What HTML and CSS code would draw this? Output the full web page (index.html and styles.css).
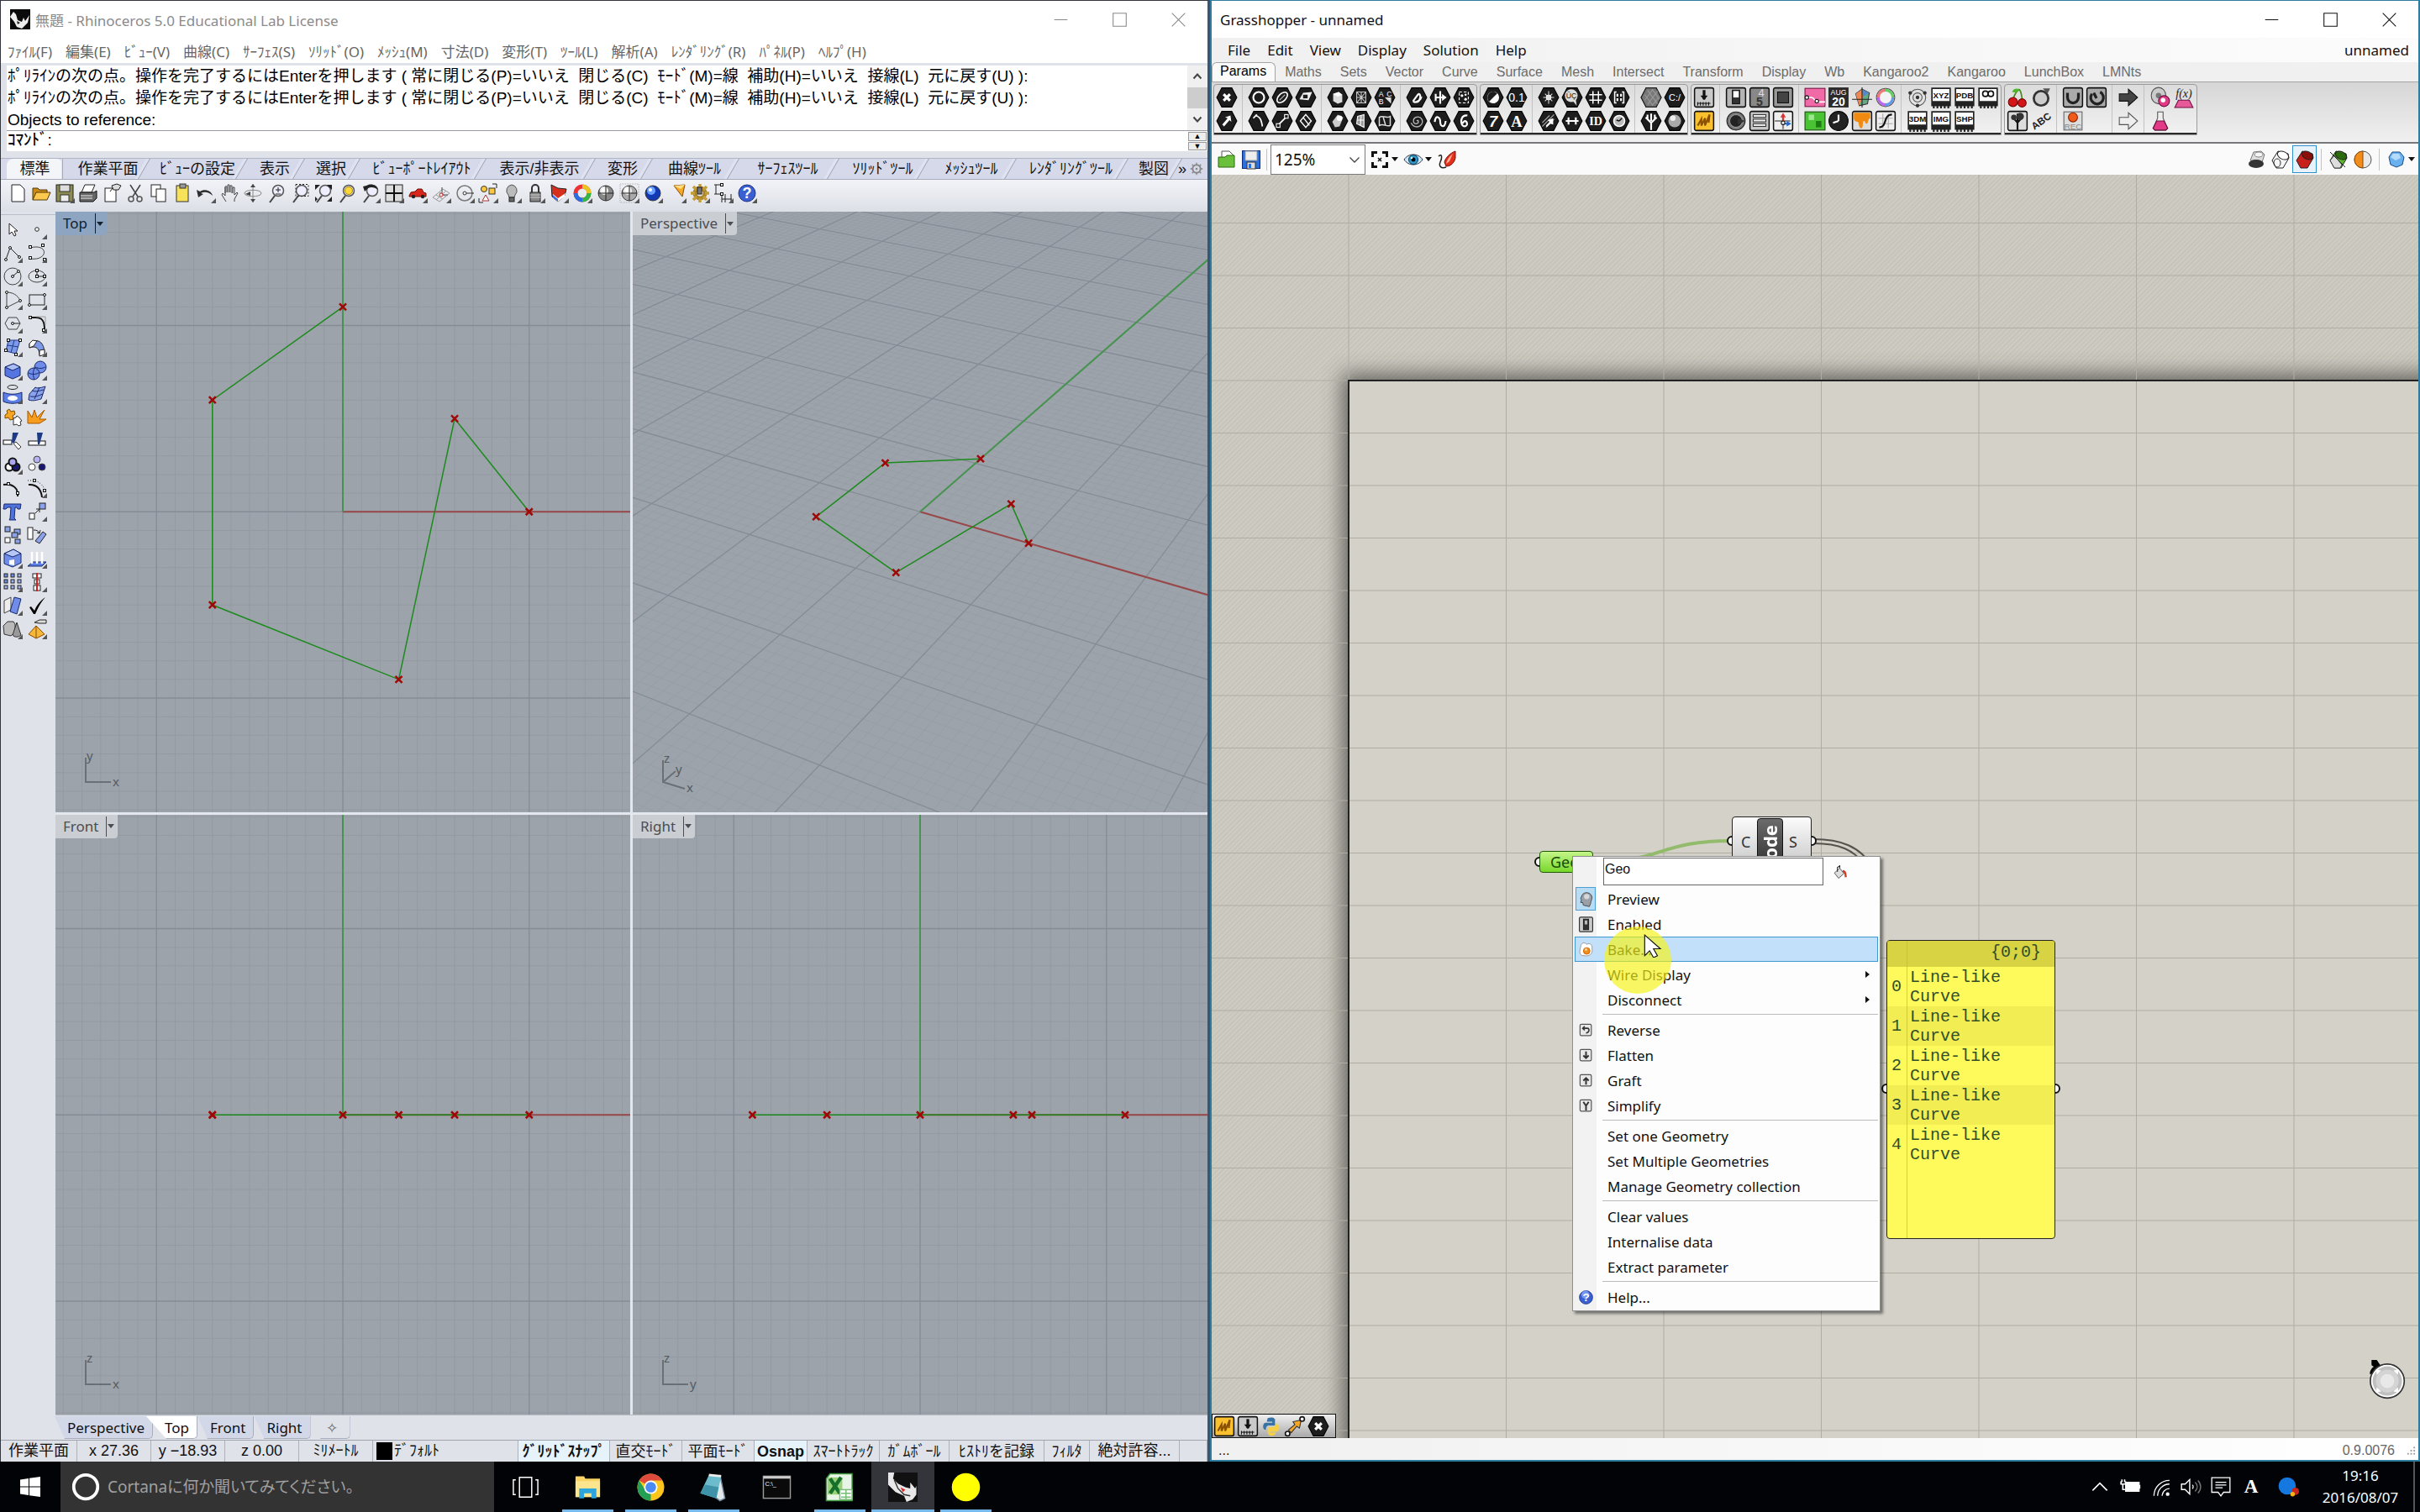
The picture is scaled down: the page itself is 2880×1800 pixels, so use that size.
FILE: index.html
```
<!DOCTYPE html>
<html lang="ja">
	<head>
		<meta charset="UTF-8" />
		<title>Rhinoceros + Grasshopper</title>
		<link rel="stylesheet" href="styles.css">
	</head>
	<body>
		<div class="desktop">
			<main class="rhino">
				<header class="titlebar">
					<span class="app-icon" data-icon="rhino"></span>
					<h1>無題 - Rhinoceros 5.0 Educational Lab License</h1>
					<div class="win-btns">
						<button aria-label="最小化" data-icon="min"></button>
						<button aria-label="最大化" data-icon="max"></button>
						<button aria-label="閉じる" data-icon="close"></button>
					</div>
				</header>
				<nav class="rhino-menu">
					<button>ﾌｧｲﾙ(F)</button>
					<button>編集(E)</button>
					<button>ﾋﾞｭｰ(V)</button>
					<button>曲線(C)</button>
					<button>ｻｰﾌｪｽ(S)</button>
					<button>ｿﾘｯﾄﾞ(O)</button>
					<button>ﾒｯｼｭ(M)</button>
					<button>寸法(D)</button>
					<button>変形(T)</button>
					<button>ﾂｰﾙ(L)</button>
					<button>解析(A)</button>
					<button>ﾚﾝﾀﾞﾘﾝｸﾞ(R)</button>
					<button>ﾊﾟﾈﾙ(P)</button>
					<button>ﾍﾙﾌﾟ(H)</button>
				</nav>
				<section class="console">
					<div class="history">
						<div class="history-text">
							<p>ﾎﾟﾘﾗｲﾝの次の点。操作を完了するにはEnterを押します ( 常に閉じる(P)=いいえ&nbsp; 閉じる(C)&nbsp; ﾓｰﾄﾞ(M)=線&nbsp; 補助(H)=いいえ&nbsp; 接線(L)&nbsp; 元に戻す(U) ):</p>
							<p>ﾎﾟﾘﾗｲﾝの次の点。操作を完了するにはEnterを押します ( 常に閉じる(P)=いいえ&nbsp; 閉じる(C)&nbsp; ﾓｰﾄﾞ(M)=線&nbsp; 補助(H)=いいえ&nbsp; 接線(L)&nbsp; 元に戻す(U) ):</p>
							<p>Objects to reference:</p>
						</div>
						<div class="scroll">
							<button aria-label="上へ" data-icon="up"></button>
							<span class="thumb"></span>
							<button aria-label="下へ" data-icon="down"></button>
						</div>
					</div>
					<div class="prompt">
						<label for="command">ｺﾏﾝﾄﾞ:</label>
						<input id="command" type="text">
						<div class="spin">
							<button aria-label="前のコマンド">▲</button>
							<button aria-label="次のコマンド">▼</button>
						</div>
					</div>
				</section>
				<nav class="tool-tabs">
					<button class="active">標準</button>
					<button>作業平面</button>
					<button>ﾋﾞｭｰの設定</button>
					<button>表示</button>
					<button>選択</button>
					<button>ﾋﾞｭｰﾎﾟｰﾄﾚｲｱｳﾄ</button>
					<button>表示/非表示</button>
					<button>変形</button>
					<button>曲線ﾂｰﾙ</button>
					<button>ｻｰﾌｪｽﾂｰﾙ</button>
					<button>ｿﾘｯﾄﾞﾂｰﾙ</button>
					<button>ﾒｯｼｭﾂｰﾙ</button>
					<button>ﾚﾝﾀﾞﾘﾝｸﾞﾂｰﾙ</button>
					<button>製図</button>
					<span class="more">»<i data-icon="cog"></i></span>
				</nav>
				<div class="toolbar" id="toolbar"></div>
				<div class="work">
					<aside class="sidebar" id="sidebar"></aside>
					<div class="viewports">
						<section class="viewport" id="vp-top">
							<button class="vp-label current"><span>Top</span></button>
						</section>
						<section class="viewport" id="vp-perspective">
							<button class="vp-label"><span>Perspective</span></button>
						</section>
						<section class="viewport" id="vp-front">
							<button class="vp-label"><span>Front</span></button>
						</section>
						<section class="viewport" id="vp-right">
							<button class="vp-label"><span>Right</span></button>
						</section>
					</div>
				</div>
				<nav class="view-tabs">
					<button>Perspective</button>
					<button class="active">Top</button>
					<button>Front</button>
					<button>Right</button>
					<button class="add" aria-label="追加">✧</button>
				</nav>
				<footer class="rhino-status">
					<span>作業平面</span>
					<span>x 27.36</span>
					<span>y −18.93</span>
					<span>z 0.00</span>
					<span>ﾐﾘﾒｰﾄﾙ</span>
					<span class="layer"><i></i>ﾃﾞﾌｫﾙﾄ</span>
					<button class="on">ｸﾞﾘｯﾄﾞｽﾅｯﾌﾟ</button>
					<button>直交ﾓｰﾄﾞ</button>
					<button>平面ﾓｰﾄﾞ</button>
					<button class="on">Osnap</button>
					<button>ｽﾏｰﾄﾄﾗｯｸ</button>
					<button>ｶﾞﾑﾎﾞｰﾙ</button>
					<button>ﾋｽﾄﾘを記録</button>
					<button>ﾌｨﾙﾀ</button>
					<span>絶対許容...</span>
					<span></span>
				</footer>
			</main>

			<section class="gh">
				<header class="titlebar">
					<h2>Grasshopper - unnamed</h2>
					<div class="win-btns">
						<button aria-label="Minimize" data-icon="min"></button>
						<button aria-label="Maximize" data-icon="max"></button>
						<button aria-label="Close" data-icon="close"></button>
					</div>
				</header>
				<nav class="gh-menu">
					<button>File</button>
					<button>Edit</button>
					<button>View</button>
					<button>Display</button>
					<button>Solution</button>
					<button>Help</button>
					<span>unnamed</span>
				</nav>
				<nav class="gh-tabs">
					<button class="active">Params</button>
					<button>Maths</button>
					<button>Sets</button>
					<button>Vector</button>
					<button>Curve</button>
					<button>Surface</button>
					<button>Mesh</button>
					<button>Intersect</button>
					<button>Transform</button>
					<button>Display</button>
					<button>Wb</button>
					<button>Kangaroo2</button>
					<button>Kangaroo</button>
					<button>LunchBox</button>
					<button>LMNts</button>
				</nav>
				<div class="ribbon" id="ribbon"></div>
				<div class="gh-tools">
					<button aria-label="Open" data-icon="ghOpen"></button>
					<button aria-label="Save" data-icon="ghSave"></button>
					<i class="sep"></i>
					<div class="zoom">
						<select aria-label="Zoom"><option>125%</option></select>
						<i data-icon="comboArrow"></i>
					</div>
					<button aria-label="Zoom extents" data-icon="ghFrame"></button>
					<i class="drop"></i>
					<button aria-label="Named views" data-icon="eye"></button>
					<i class="drop"></i>
					<button aria-label="Sketch" data-icon="brush"></button>
					<div class="gh-tools-right">
						<button aria-label="No preview" data-icon="tubeOff"></button>
						<button aria-label="Wireframe preview" data-icon="tubeWire"></button>
						<button class="picked" aria-label="Shaded preview" data-icon="tubeRed"></button>
						<i class="sep"></i>
						<button aria-label="Selected only" data-icon="tubeGreen"></button>
						<button aria-label="Document preview" data-icon="ballOrange"></button>
						<i class="sep"></i>
						<button aria-label="Mesh quality" data-icon="gemBlue"></button>
						<i class="drop"></i>
					</div>
				</div>
				<div class="canvas" id="canvas">
					<div class="node geo">Geo</div>
					<div class="node explode">
						<span class="in">C</span>
						<span class="core"><b>Explode</b></span>
						<span class="out">S</span>
					</div>
					<div class="node panel">
						<div class="path">{0;0}</div>
						<ol start="0">
							<li><i>0</i><p>Line-like Curve</p></li>
							<li><i>1</i><p>Line-like Curve</p></li>
							<li><i>2</i><p>Line-like Curve</p></li>
							<li><i>3</i><p>Line-like Curve</p></li>
							<li><i>4</i><p>Line-like Curve</p></li>
						</ol>
					</div>
					<div class="recent" id="recent"></div>
					<div class="compass" data-icon="compass"></div>
					<div class="context">
						<div class="name-row">
							<input type="text" value="Geo" aria-label="Name">
							<button aria-label="Colour" data-icon="bucket"></button>
						</div>
						<button><i class="checked" data-icon="head"></i>Preview</button>
						<button><i data-icon="toggle"></i>Enabled</button>
						<button class="hover"><i data-icon="egg"></i>Bake...</button>
						<button class="sub"><i></i>Wire Display</button>
						<button class="sub"><i></i>Disconnect</button>
						<hr>
						<button><i data-icon="mReverse"></i>Reverse</button>
						<button><i data-icon="mFlatten"></i>Flatten</button>
						<button><i data-icon="mGraft"></i>Graft</button>
						<button><i data-icon="mSimplify"></i>Simplify</button>
						<hr>
						<button><i></i>Set one Geometry</button>
						<button><i></i>Set Multiple Geometries</button>
						<button><i></i>Manage Geometry collection</button>
						<hr>
						<button><i></i>Clear values</button>
						<button><i></i>Internalise data</button>
						<button><i></i>Extract parameter</button>
						<hr>
						<button><i data-icon="help"></i>Help...</button>
					</div>
					<div class="spot"></div>
					<div class="cursor" data-icon="cursor"></div>
				</div>
				<footer class="gh-status">
					<b>...</b>
					<span>0.9.0076</span>
					<i data-icon="resize"></i>
				</footer>
			</section>
		</div>

		<div class="taskbar">
			<button class="start" aria-label="スタート" data-icon="windows"></button>
			<label class="search">
				<i data-icon="ring"></i>
				<input type="text" placeholder="Cortanaに何か聞いてみてください。">
			</label>
			<button aria-label="タスク ビュー" data-icon="taskview"></button>
			<button class="open" aria-label="エクスプローラー" data-icon="explorer"></button>
			<button class="open" aria-label="Chrome" data-icon="chrome"></button>
			<button class="open" aria-label="メモ帳" data-icon="notepad"></button>
			<button aria-label="コマンド プロンプト" data-icon="cmd"></button>
			<button class="open" aria-label="Excel" data-icon="excel"></button>
			<button class="open front" aria-label="Rhinoceros" data-icon="rhinoBig"></button>
			<button class="open" aria-label="Pointer" data-icon="yellow"></button>
			<div class="tray">
				<i data-icon="chevron"></i>
				<i data-icon="battery"></i>
				<i data-icon="wifi"></i>
				<i data-icon="speaker"></i>
				<i data-icon="message"></i>
				<b>A</b>
				<i class="ball" data-icon="ball"></i>
				<time>19:16<br>2016/08/07</time>
			</div>
		</div>

		<script src="script.js"></script>
	</body>
</html>
```

FILE: styles.css
```
* {
	box-sizing: border-box;
}

body {
	margin: 0;
	height: 100vh;
	display: flex;
	flex-direction: column;
	overflow: hidden;
	background: #020307;
	color: #111;
	font-family: "Noto Sans", "Noto Sans CJK JP", sans-serif;
	font-size: 17px;
}

button,
input,
select {
	margin: 0;
	padding: 0;
	border: none;
	border-radius: 0;
	background: none;
	color: inherit;
	font: inherit;
	white-space: nowrap;
}

h1,
h2,
p,
ol {
	margin: 0;
	padding: 0;
	font-size: inherit;
	font-weight: normal;
}

i {
	font-style: normal;
}

svg {
	display: block;
}

.desktop {
	flex: 1;
	min-height: 0;
	display: flex;
}

/* windows */
.rhino,
.gh {
	flex: 1;
	min-width: 0;
	display: flex;
	flex-direction: column;
	border: 1px solid #33353d;
	background: #dfe2e9;
}
.rhino {
	border-right: 3px solid #3b5570;
	border-bottom: none;
}
.gh {
	border: 2px solid #2e7c9f;
	border-width: 1px 2px 2px;
	background: #f0f0f0;
}

.titlebar {
	display: flex;
	align-items: center;
	height: 44px;
	flex: none;
	padding-left: 11px;
	background: #fff;
}
.titlebar h1 {
	padding-left: 6px;
	color: #8b8b8b;
}
.app-icon svg {
	width: 24px;
	height: 24px;
}
.win-btns {
	margin-left: auto;
	display: flex;
}
.win-btns button {
	width: 70px;
	display: flex;
	justify-content: center;
}
.win-btns svg {
	width: 17px;
	height: 17px;
}
.rhino .win-btns {
	color: #888;
}

/* rhino menu */
.rhino-menu {
	display: flex;
	gap: 16px;
	height: 30px;
	flex: none;
	padding: 0 8px;
	align-items: center;
	background: #fff;
	color: #666;
}

/* command area */
.console {
	flex: none;
	margin: 3px 0 0 7px;
	background: #fff;
	font-family: "Liberation Sans", "Noto Sans CJK JP", sans-serif;
	font-size: 19px;
	color: #000;
}
.history {
	display: flex;
	height: 78px;
	border-bottom: 1px solid #999ca4;
}
.history-text {
	flex: 1;
	min-width: 0;
	overflow: hidden;
}
.history p {
	line-height: 26px;
	padding-left: 1px;
	white-space: nowrap;
}
.scroll {
	width: 24px;
	display: flex;
	flex-direction: column;
	background: #f0f0f0;
}
.scroll button {
	height: 26px;
	display: flex;
	align-items: center;
	justify-content: center;
}
.scroll svg {
	width: 12px;
	height: 12px;
}
.thumb {
	flex: 1;
	background: #cdcdcd;
}
.prompt {
	display: flex;
	height: 24px;
}
.prompt label {
	line-height: 22px;
	font-weight: 500;
	padding-left: 1px;
}
.prompt input {
	flex: 1;
}
.spin {
	width: 24px;
	display: flex;
	flex-direction: column;
	gap: 1px;
	padding: 1px;
}
.spin button {
	flex: 1;
	border: 1px solid #999;
	background: #eee;
	font-size: 9px;
	line-height: 8px;
}

/* toolbar tabs */
.tool-tabs {
	display: grid;
	grid-template-columns: 67px 97px 116px 68px 66px 150px 130px 68px 103px 119px 107px 104px 133px 64px 1fr;
	height: 26px;
	flex: none;
	margin-top: 8px;
	padding-left: 7px;
	border-top: 1px solid #b0b5c6;
	border-bottom: 1px solid #a7acbd;
	background: #d5d9ea;
	font-size: 18px;
	font-family: "Liberation Sans", "Noto Sans CJK JP", sans-serif;
}
.tool-tabs button {
	position: relative;
	line-height: 24px;
	padding-left: 10px;
}
.tool-tabs button::after {
	content: "";
	position: absolute;
	right: 0;
	top: 0;
	width: 4px;
	height: 24px;
	border-right: 1px solid #9a9fb2;
	background: #dfe2ef;
	transform: skewX(-30deg);
}
.tool-tabs .active {
	padding-left: 0;
	background: #f4f5f9;
	border-radius: 8px 8px 0 0;
}
.tool-tabs .active::after {
	transform: none;
	border-color: #a7acbd;
	width: 1px;
}
.more {
	display: flex;
	align-items: center;
	gap: 4px;
	padding-left: 2px;
	line-height: 22px;
}
.more svg {
	width: 16px;
	height: 16px;
}

.toolbar {
	display: flex;
	height: 38px;
	flex: none;
	padding: 0 6px;
	background: linear-gradient(#f2f3f7, #dcdfe6);
}
.toolbar button,
.sidebar button {
	width: 28px;
	display: flex;
	align-items: center;
	justify-content: center;
}
.toolbar svg,
.sidebar svg {
	width: 24px;
	height: 24px;
}
.toolbar button {
	padding-bottom: 6px;
}

.work {
	flex: 1;
	min-height: 0;
	display: flex;
}
.sidebar {
	width: 65px;
	display: grid;
	grid-template-columns: 29px 28px;
	grid-auto-rows: 28px;
	align-content: start;
	margin-top: 3px;
	padding-top: 3px;
	border-top: 1px solid #b9bdc9;
	background: #dfe2e9;
}

/* viewports */
.viewports {
	flex: 1;
	display: grid;
	grid-template-columns: 1fr 1fr;
	grid-template-rows: 1fr 1fr;
	gap: 3px;
	background: #e4e8ee;
	border-bottom: 1px solid #b5b9c2;
}
.viewport {
	position: relative;
	overflow: hidden;
	background: #9ca3ab;
}
.scene {
	position: absolute;
	inset: 0;
	width: 100%;
	height: 100%;
}
.axes {
	position: absolute;
	left: 28px;
	bottom: 20px;
	width: 60px;
	height: 72px;
	overflow: visible;
}
.axes text {
	font: 15px "Noto Sans", sans-serif;
	fill: #555b62;
}
.vp-label {
	position: absolute;
	left: 0;
	top: 0;
	height: 28px;
	display: flex;
	align-items: center;
	padding: 0 4px 0 9px;
	background: #cacdd2;
	border-radius: 0 0 4px 0;
	color: #4a4d52;
}
.vp-label span {
	padding-right: 9px;
	line-height: 24px;
	border-right: 1px solid currentColor;
}
.vp-label::after,
.drop {
	content: "";
	border: 4px solid transparent;
	border-top: 5px solid currentColor;
	border-bottom: none;
}
.vp-label::after {
	margin-left: 1px;
}
.vp-label.current {
	background: #8da5c0;
	color: #13202e;
}

.view-tabs {
	display: flex;
	height: 30px;
	flex: none;
	padding: 1px 0 1px 64px;
	border-bottom: 1px solid #a0a4ae;
}
.view-tabs button {
	position: relative;
	padding: 0 9px 0 15px;
	background: #d3d8e8;
	border: 1px solid #a9aebf;
	border-width: 0 1px 1px 0;
	border-radius: 0 0 5px 0;
	line-height: 28px;
	clip-path: polygon(0 0, 100% 0, 100% 100%, 12px 100%);
}
.view-tabs .active {
	padding-left: 22px;
	margin-left: -8px;
	background: #fff;
	clip-path: polygon(0 0, 100% 0, 100% 100%, 24px 100%);
}
.view-tabs .add {
	background: #dfe2e9;
	padding: 0 14px 0 18px;
	color: #666;
}

.rhino-status {
	display: grid;
	grid-template-columns: 91px 88px 88px 88px 88px 173px 109px 86px 86px 63px 86px 83px 113px 54px 107px 1fr;
	height: 25px;
	flex: none;
	background: #dfe2e9;
	font-family: "Liberation Sans", "Noto Sans CJK JP", sans-serif;
	font-size: 18px;
	text-align: center;
}
.rhino-status > * {
	overflow: hidden;
	white-space: nowrap;
	line-height: 24px;
	border-right: 1px solid #adb1bb;
}
.rhino-status .on {
	background: #e7f3fb;
	font-weight: bold;
}
.rhino-status .layer {
	display: flex;
	gap: 2px;
	padding: 2px 4px;
	line-height: 20px;
}
.layer i {
	width: 19px;
	background: #000;
}

/* grasshopper */
.gh .titlebar {
	padding-left: 10px;
}
.gh-menu {
	display: flex;
	align-items: center;
	gap: 20px;
	height: 29px;
	flex: none;
	padding: 0 11px 0 19px;
	background: linear-gradient(90deg, #f0f0f0, #fcfcfc);
}
.gh-menu span {
	margin-left: auto;
}
.gh-tabs {
	display: flex;
	height: 24px;
	flex: none;
	color: #6c6c6c;
	font: 16px "Liberation Sans", sans-serif;
	border-bottom: 1px solid #a5a5a5;
}
.gh-tabs button {
	padding: 0 11px;
}
.gh-tabs .active {
	color: #000;
	padding: 0 10px 3px 9px;
	background: #fafafa;
	border: 1px solid #a5a5a5;
	border-bottom: none;
	border-radius: 6px 6px 0 0;
}
.ribbon {
	display: flex;
	gap: 3px;
	height: 73px;
	flex: none;
	padding: 2px 2px 8px;
	background: linear-gradient(#d6d6d6, #f0f0f0);
	border-bottom: 2px solid #77787c;
}
.ribbon-panel {
	display: flex;
	flex-direction: column;
	overflow: hidden;
	border: 1px solid #9c9c9c;
	border-radius: 4px 4px 0 0;
	background: linear-gradient(#dcdcdc, #f2f2f2);
}
.ribbon-groups {
	display: flex;
	padding: 0 1px;
	flex: none;
}
.ribbon-group {
	display: grid;
	grid-auto-flow: column;
	grid-template-rows: 28px 28px;
	grid-auto-columns: 28px;
	padding: 1px 0 0;
}
.ribbon-group + .ribbon-group {
	margin-left: 4px;
	padding-left: 5px;
	border-left: 1px solid #c2c2c2;
}
.ribbon-group button {
	display: flex;
	align-items: center;
	justify-content: center;
}
.ribbon svg,
.recent svg {
	width: 26px;
	height: 26px;
}
.caption {
	flex: none;
	height: 18px;
	line-height: 15px;
	background: #2a2a2a;
	color: #fff;
	text-align: center;
	font-size: 14px;
}

.gh-tools {
	display: flex;
	align-items: center;
	height: 37px;
	flex: none;
	padding: 0 1px 0 3px;
	background: #fafafa;
}
.gh-tools button {
	width: 29px;
	height: 33px;
	display: flex;
	align-items: center;
	justify-content: center;
}
.gh-tools svg {
	width: 24px;
	height: 24px;
}
.gh-tools .sep {
	width: 1px;
	height: 26px;
	margin: 0 4px;
	background: #c4c4c4;
}
.zoom {
	position: relative;
	margin-right: 2px;
}
.zoom select {
	display: block;
	width: 113px;
	height: 36px;
	padding: 0 0 0 4px;
	border: 1px solid #7a7a7a;
	background: #fff;
	font-size: 19px;
	appearance: none;
}
.zoom i {
	position: absolute;
	right: 7px;
	top: 12px;
	pointer-events: none;
}
.zoom svg {
	width: 12px;
	height: 12px;
}
.gh-tools .drop {
	margin: 0 3px 0 0;
	color: #111;
}
.gh-tools-right {
	margin-left: auto;
	display: flex;
	align-items: center;
}
.gh-tools-right .sep {
	margin: 0 5px;
}
.gh-tools .picked {
	border: 1px solid #2f8fc9;
	background: #e8f2fa;
}

.canvas {
	position: relative;
	flex: 1;
	min-height: 0;
	overflow: hidden;
	background: repeating-linear-gradient(135deg, #cecbc3 0 2px, #c7c4bb 2px 4px);
}
.canvas > svg {
	position: absolute;
	inset: 0;
	width: 100%;
	height: 100%;
}
.node {
	position: absolute;
	border: 1px solid #222;
	border-radius: 4px;
}
.geo {
	left: 390px;
	top: 805px;
	width: 64px;
	height: 26px;
	padding-left: 12px;
	border-color: #1c5a00;
	background: linear-gradient(#c4f58a, #78d82a);
	line-height: 24px;
	font-size: 18px;
	color: #174a00;
}
.explode {
	left: 619px;
	top: 764px;
	width: 95px;
	height: 118px;
	display: flex;
	justify-content: space-between;
	padding: 0 16px 0 10px;
	background: linear-gradient(#fcfcfc, #c8c8c8 50%, #a5a5a5);
	font-size: 18px;
	line-height: 58px;
	color: #333;
}
.core {
	width: 31px;
	margin: 1px 0;
	padding-bottom: 12px;
	display: flex;
	align-items: center;
	justify-content: center;
	border: 1px solid #111;
	border-radius: 4px;
	background: linear-gradient(#6b6b6b, #333 50%);
	color: #fff;
	writing-mode: vertical-rl;
}
.core b {
	font-size: 22px;
	line-height: 26px;
	transform: rotate(180deg);
}
.panel {
	left: 803px;
	top: 911px;
	width: 201px;
	height: 356px;
	background: linear-gradient(90deg, transparent 23px, #d5cf45 23px 24px, transparent 24px), #fffa5c;
	color: #2f4f2a;
	font: 20px "Liberation Mono", monospace;
}
.panel .path {
	height: 31px;
	padding-right: 16px;
	line-height: 28px;
	text-align: right;
	background: rgba(190, 185, 50, 0.6);
}
.panel ol {
	list-style: none;
}
.panel li {
	display: flex;
	align-items: center;
	height: 47px;
	line-height: 23px;
}
.panel li:nth-child(even) {
	background: rgba(190, 185, 50, 0.2);
}
.panel li i {
	width: 18px;
	padding-left: 5px;
	margin-right: 9px;
}
.panel li p {
	width: 130px;
}
.recent {
	position: absolute;
	left: 0;
	bottom: 0;
	display: flex;
	align-items: center;
	height: 29px;
	padding-right: 6px;
	border: 1px solid #111;
	background: linear-gradient(#f0f0f0, #a9a9a9);
}
.recent button {
	width: 28px;
	display: flex;
	justify-content: center;
}
.compass {
	position: absolute;
	right: 14px;
	bottom: 45px;
}
.compass svg {
	width: 50px;
	height: 50px;
}

/* context menu */
.context {
	position: absolute;
	left: 429px;
	top: 811px;
	width: 367px;
	display: flex;
	flex-direction: column;
	padding: 1px 2px 1px;
	border: 1px solid #8e8e8e;
	background: linear-gradient(90deg, #f2f2f2 28px, #fdfdfd 28px);
	box-shadow: 3px 3px 3px rgba(0, 0, 0, 0.45);
	color: #111;
}
.context button {
	display: flex;
	align-items: center;
	height: 30px;
	flex: none;
	padding-left: 1px;
	text-align: left;
}
.context i {
	width: 24px;
	height: 28px;
	display: flex;
	align-items: center;
	justify-content: center;
	margin-right: 14px;
	border: 1px solid transparent;
}
.context i svg {
	width: 19px;
	height: 19px;
}
.context .checked {
	border-color: #4d9fd6;
	background: #b9dcf5;
}
.context .hover {
	border: 1px solid #3f97cf;
	background: #c2e0fa;
	padding-left: 0;
}
.context .sub::after {
	content: "";
	margin: 0 10px 0 auto;
	border: 4px solid transparent;
	border-left: 5px solid #111;
	border-right: none;
}
.context hr {
	width: 328px;
	margin: 2px 0 3px auto;
	border: none;
	border-top: 1px solid #bcbcbc;
	flex: none;
}
.name-row {
	display: flex;
	height: 34px;
	padding-left: 34px;
}
.name-row input {
	width: 262px;
	height: 33px;
	padding: 0 1px 6px;
	border: 1px solid #666;
	background: #fff;
	font: 16px "Liberation Sans", sans-serif;
}
.name-row button {
	height: 34px;
	padding-left: 11px;
}
.name-row svg {
	width: 17px;
	height: 17px;
}
.spot {
	position: absolute;
	left: 467px;
	top: 895px;
	width: 80px;
	height: 80px;
	border-radius: 50%;
	background: rgba(247, 243, 20, 0.66);
}
.cursor {
	position: absolute;
	left: 513px;
	top: 904px;
}
.cursor svg {
	width: 28px;
	height: 28px;
}

.gh-status {
	display: flex;
	align-items: center;
	height: 26px;
	flex: none;
	padding: 3px 3px 0 8px;
	background: linear-gradient(90deg, #f0f0f0, #fff);
	color: #666;
	font: 16px "Liberation Sans", sans-serif;
}
.gh-status b {
	color: #111;
	margin-right: auto;
	font-weight: normal;
}
.gh-status span {
	margin-right: 14px;
}
.gh-status svg {
	width: 11px;
	height: 14px;
}

/* taskbar */
.taskbar {
	display: flex;
	height: 60px;
	flex: none;
	background: #020307;
	color: #fff;
}
.taskbar > button {
	width: 75px;
	display: flex;
	align-items: center;
	justify-content: center;
}
.taskbar > button svg {
	width: 35px;
	height: 35px;
}
.taskbar .start {
	width: 72px;
}
.taskbar .start svg {
	width: 24px;
	height: 24px;
}
.search {
	width: 516px;
	display: flex;
	align-items: center;
	padding-left: 12px;
	gap: 8px;
	background: #333;
}
.search + button {
	width: 74px;
}
.search svg {
	width: 36px;
	height: 36px;
}
.search input {
	flex: 1;
	font-size: 19px;
	font-feature-settings: "palt";
}
.search input::placeholder {
	color: #a0a0a0;
	opacity: 1;
}
.taskbar .open {
	background: linear-gradient(#76b9ed, #76b9ed) center bottom / 61px 3px no-repeat;
}
.taskbar .front {
	background-color: #34353a;
	background-size: 75px 3px;
}
.tray {
	margin-left: auto;
	display: flex;
	align-items: center;
	margin-right: 6px;
	padding-right: 15px;
	border-right: 2px solid #555;
}
.tray i,
.tray b {
	width: 36px;
	display: flex;
	justify-content: center;
}
.tray b {
	font: bold 23px "Liberation Serif", serif;
}
.tray i svg {
	width: 26px;
	height: 26px;
}
.tray .ball {
	margin-left: 8px;
}
.tray time {
	width: 96px;
	margin-left: 20px;
	font-size: 17px;
	line-height: 26px;
	text-align: center;
}
```

FILE: script.js
```
const line = (d, color = "#222", w = 1) =>
	`<path d="${d}" fill="none" stroke="${color}" stroke-width="${w}"/>`;
const dashed = (d, color, w, dash) =>
	`<path d="${d}" fill="none" stroke="${color}" stroke-width="${w}" stroke-dasharray="${dash}"/>`;
const fill = (d, color, edge = "none") => `<path d="${d}" fill="${color}" stroke="${edge}"/>`;
const dot = (x, y, r, color, edge = "none", w = 1) =>
	`<circle cx="${x}" cy="${y}" r="${r}" fill="${color}" stroke="${edge}" stroke-width="${w}"/>`;
const box = (x, y, w, h, color, edge = "none") =>
	`<rect x="${x}" y="${y}" width="${w}" height="${h}" fill="${color}" stroke="${edge}"/>`;
const word = (t, x, y, size, color = "#fff", extra = "") =>
	`<text x="${x}" y="${y}" font-size="${size}" fill="${color}" text-anchor="middle" font-family="Liberation Sans, sans-serif" ${extra}>${t}</text>`;
const knob = (x, y) => box(x - 1.5, y - 1.5, 3, 3, "#fff", "#111");

// flyout corner
const fly = `<path d="M24 18v6h-6z" fill="#555"/>`;
const lens = (inner = "") => line("M10 15l-6 8", "#444", 2) + dot(14, 9, 6.5, "#eef", "#555", 1.5) + inner;
const page = (x, y, w, h) => box(x, y, w, h, "#fff", "#222");
const sphere = (c1, c2) => dot(12, 12, 9, c2, "#333") + dot(10, 9, 5, c1) + dot(9, 8, 2, "#fff");

// grasshopper icon bases
const hex = (inner) => fill("M6.5 1.5h11L23 12l-5.5 10.5h-11L1 12z", "#1d1d1d", "#000") + inner;
const tile = (inner, bg = "#c9c9c9") =>
	`<rect x="1.5" y="1.5" width="21" height="21" rx="2" fill="${bg}" stroke="#111" stroke-width="1.4"/>` + inner;
const chip = (t) =>
	`<path d="M2 2h20v19H2z" fill="#fff" stroke="#222" stroke-width="1.5"/><path d="M2 16h20v5H2z" fill="#222"/>` +
	dashed("M3 22.500h18", "#222", 3, "2 2") + word(t, 12, 13, 9, "#111", 'font-weight="bold"');
const tube = (c1, c2) =>
	fill("M2 13L9 2l12 3 1 5-7 12H7z", c1, "#222") +
	`<ellipse cx="15" cy="7" rx="7" ry="4.500" transform="rotate(25 15 7)" fill="${c2}" stroke="#222"/>`;

const scribble = line("M5 17l4-7v7l4-8v8l5-12-1 9", "#8a5200", 2);
const mini = (inner) => `<rect x="3" y="3" width="17" height="17" rx="2" fill="#e8e8e8" stroke="#555" stroke-width="1.500"/>` + inner;

const icons = {
	// window chrome
	min: line("M1 12h22", "currentColor", 1.5),
	max: line("M1 1h22v22H1z", "currentColor", 1.5),
	close: line("M1 1l22 22M23 1L1 23", "currentColor", 1.5),
	up: line("M3 17l9-10 9 10", "#444", 4),
	down: line("M3 7l9 10 9-10", "#444", 4),
	comboArrow: line("M1 7l11 11L23 7", "#444", 2.5),
	cog: dot(12, 12, 7, "none", "#888", 3) + line("M12 1v4M12 19v4M1 12h4M19 12h4M4 4l3 3M17 17l3 3M20 4l-3 3M4 20l3-3", "#888", 2) + dot(12, 12, 2, "#888"),
	rhino: box(0, 0, 24, 24, "#0a0a0a") + fill("M0 9l4-6 3 3 2 7 5 2 2-5 2 4 5-7-2 9-7 7-6-2-3-6z", "#eee") + fill("M8 14l4 2-3 2z", "#222"),

	// standard toolbar
	fNew: fill("M5 2h10l5 5v15H5z", "#fff", "#222"),
	fOpen: fill("M2 20V6h6l2 2h9v4", "#c98a1a", "#553a00") + fill("M2 20l4-9h17l-4 9z", "#fcc94e", "#553a00"),
	fSave: box(2, 2, 20, 20, "#8b8b52", "#222") + box(6, 2, 12, 8, "#ddd", "#333") + box(7, 14, 10, 8, "#eee", "#333") + fly,
	fPrint: fill("M8 2h12l-4 9H4z", "#fff", "#222") + fill("M2 11h17l3-2v9l-4 4H2z", "#666", "#111") + line("M3 15h14M3 18h14", "#eee"),
	fProps: page(4, 6, 13, 16) + fill("M12 3l6-2 5 2-3 5h-6z", "#ddd", "#222") + line("M13 6l-3 4"),
	fCut: line("M6 2l9 14M18 2L9 16", "#444", 1.5) + dot(7, 19, 3, "none", "#555", 1.5) + dot(17, 19, 3, "none", "#555", 1.5),
	fCopy: page(3, 2, 11, 14) + page(9, 7, 11, 15),
	fPaste: box(5, 3, 14, 19, "#f7e25a", "#333") + box(9, 1, 7, 5, "#999", "#333"),
	fUndo: fill("M1 8l2 9 6-4-3-1c4-2 9-2 14 3-1-6-10-9-15-5z", "#2d2d2d") + fly,
	fPan: line("M8 22l-5-8M3 14l1-2 3 3V5M7 12V4h2v7M10 11V2h2v9M13 11V3h2v9M16 12V5h2v9l3-3 1 1-4 7v3", "#444", 1),
	fRotate: line("M2 12c0-5 20-5 20 0s-20 5-20 0M12 1v22", "#888") + fill("M12 1l3 4H9zM12 23l3-4H9zM3 13l6-3v5z", "#444"),
	fZoom: lens(line("M11 8h6M14 5v6M11 13h6", "#222")),
	fZoomWin: lens() + `<rect x="7" y="1.500" width="15" height="14" fill="none" stroke="#222" stroke-dasharray="2 2"/>`,
	fZoomExt: lens() + fill("M2 2h6L2 8zM22 2v6l-6-6zM22 22h-6l6-6zM2 22v-6l3 3z", "#222"),
	fZoomSel: lens(dot(14, 9, 4.5, "#ffd83a", "#a80")),
	fZoomPrev: lens() + fill("M3 4l2 6 4-4c4-2 8-1 12 2-2-7-10-8-14-5z", "#222") + fly,
	fFour: box(2, 2, 20, 20, "#ddd", "#222") + line("M12 2v20M2 12h20", "#111", 2) + fly,
	fCar: fill("M2 15l2-4 5-1 3-3h5l2 4 3 1v4H2z", "#d8261c", "#7a0c06") + dot(7, 16, 2.2, "#222") + dot(18, 16, 2.2, "#222") + fly,
	fPlane: line("M2 17l12-10 8 5-12 10zM6 14l8 5M10 11l8 5M6 20L18 9", "#999") + line("M13 5v9h7", "#444", 1) + dot(12, 14, 2, "#fff", "#c22") + fly,
	fCircle: dot(12, 12, 9, "none", "#777", 1.5) + dot(12, 12, 2, "#fff", "#333") + line("M14 12h9", "#333") + fly,
	fSelect: dot(7, 7, 3.500, "#ffc83a", "#333") + box(13, 6, 7, 7, "#ffc83a", "#333") + fill("M9 14l4 7H5z", "#fff", "#a33") + line("M1 18v5h5M17 1h5v5", "#222") + fly,
	fBulb: fill("M12 2a7 7 0 0 0-4 12l1 3h6l1-3a7 7 0 0 0-4-12z", "#bbb", "#555") + box(9, 17, 6, 5, "#666", "#222") + fly,
	fLock: line("M8 11V6a4 4 0 0 1 8 0v5", "#333", 2) + box(6, 11, 12, 11, "#888", "#222") + line("M6 14h12M6 17h12", "#ccc") + fly,
	fRender: fill("M3 2l8 4 10 1-2 8-8 7-7-6z", "#d6301c", "#222") + fill("M5 13l6 5 9-6-1 4-8 6-6-5z", "#fff") + fill("M5 14l6 5v3l-6-5z", "#3f6bdc") + fly,
	fWheel: dot(12, 12, 8, "none", "#e33", 5) + line("M12 4a8 8 0 0 1 8 8", "#e8c520", 5) + line("M20 12a8 8 0 0 1-8 8", "#33b54a", 5) + line("M12 20a8 8 0 0 1-8-8", "#2a6fe0", 5) + fly,
	fShade: sphere("#eee", "#888") + line("M12 3v18M3 12h18", "#222"),
	fGhost: `<rect x="1" y="1" width="22" height="22" fill="none" stroke="#aaa" stroke-dasharray="1 1"/>` + sphere("#eee", "#aaa") + line("M12 3v18M3 12h18", "#222") + fly,
	fBlue: sphere("#6aa0ff", "#1238b4") + fly,
	fCone: fill("M9 3l13-1-3 14z", "#f7a928", "#8a4b00") + fill("M9 3l13-1-5 5z", "#ffe08a") + fly,
	fGear: dot(12, 12, 6, "none", "#a8842a", 5) + line("M12 1v5M12 18v5M1 12h5M18 12h5M4 4l4 4M16 16l4 4M20 4l-4 4M4 20l4-4", "#c49d38", 3.5) + box(9, 5, 5, 8, "#777", "#222") + fly,
	fDims: line("M3 2v11M1 2h10M1 13h9v10M14 13v10M21 13v10M10 19h12", "#222") + knob(10, 2) + knob(10, 13) + fly,
	help: dot(12, 12, 10, "#3a5fd0", "#1a2f86") + dot(11, 8, 6, "#7596ee") + word("?", 12, 18, 17, "#fff", 'font-weight="bold"'),
	helpFly: dot(12, 12, 10, "#3a5fd0", "#1a2f86") + word("?", 12, 18, 18, "#fff", 'font-weight="bold"') + fly,

	// side toolbar
	sArrow: fill("M8 5v13l3-3 3 5 2-1-2-5h4z", "#fff", "#222"),
	sPoint: dot(12, 12, 2.3, "#fff", "#222") + fly,
	sPoly: line("M4 20L9 6l11 11") + dot(4, 20, 1.5, "#fff", "#111") + dot(9, 6, 1.5, "#fff", "#111") + dot(20, 17, 1.5, "#fff", "#111") + fly,
	sCurve: line("M4 6c22-6 22 16 0 13", "#444") + knob(4, 5) + knob(4, 18) + knob(19, 3) + knob(21, 20) + fly,
	sCircle: dot(12, 12, 10, "none", "#444") + line("M12 12l7-6") + dot(12, 12, 1.5, "#fff", "#111") + dot(19, 6, 1.5, "#fff", "#111") + fly,
	sEllipse: `<ellipse cx="12" cy="12" rx="10" ry="7" fill="none" stroke="#444"/>` + line("M12 5v7h9") + knob(12, 5) + knob(12, 12) + knob(21, 12) + fly,
	sArc: line("M5 3v18l16-8C18 6 12 3 5 3", "#444") + dot(5, 3, 1.5, "#fff", "#111") + dot(21, 13, 1.5, "#fff", "#111") + dot(5, 21, 1.5, "#fff", "#111") + fly,
	sRect: box(3, 6, 18, 12, "none", "#222") + dot(3, 18, 1.5, "#fff", "#111") + dot(21, 6, 1.5, "#fff", "#111") + fly,
	sHexa: line("M7 5h10l4 7-4 7H7l-4-7z", "#444") + line("M12 12h9") + dot(12, 12, 1.5, "#fff", "#111") + fly,
	sFillet: line("M3 5h8c7 0 10 4 10 14", "#111", 2) + line("M11 4h11v10", "#999") + knob(4, 5) + knob(20, 20) + fly,
	sSrf: fill("M7 4h14l-5 16-12-3z", "#7d9ae8", "#223a8a") + line("M6 10l13 2M14 4l-4 15", "#223a8a") + knob(7, 4) + knob(21, 4) + knob(4, 16) + knob(16, 21) + fly,
	sPatch: fill("M3 8c7-6 17-5 18 11l-6 3c0-8-4-12-12-9z", "#7d9ae8", "#222") + fill("M3 8l4-4 5 1-4 6-5 2z", "#fff", "#222") + fill("M15 16l6-1v6l-6 2z", "#fff", "#222") + fly,
	sBox: fill("M3 8l10-4 8 4v10l-9 4-9-4z", "#5576e0", "#18286a") + fill("M3 8l10-4 8 4-9 4z", "#a9bdf6", "#18286a") + fly,
	sBalls: dot(16, 8, 7, "#6f8de8", "#18286a") + dot(8, 16, 7, "#6f8de8", "#18286a") + line("M2 15c4 2 8 2 12 0M9 9c-2 5-2 9 0 14M10 8c4 2 8 2 12 0", "#18286a") + fly,
	sExtr: `<ellipse cx="12" cy="4" rx="6" ry="2.500" fill="none" stroke="#222"/>` + fill("M1 10c7 3 15 3 22 0v11c-7 3-15 3-22 0z", "#5b7fe6", "#18286a") + `<ellipse cx="12" cy="17" rx="6" ry="3" fill="#fff"/>` + fly,
	sMesh: fill("M3 12l7-8c3 2 8 0 12-1l-5 15c-5 1-9 3-15 1z", "#8aa2ea", "#18286a") + line("M6 8c5 2 9 0 14-1M9 18l6-14M4 15c6 1 10-1 15-3", "#18286a") + fly,
	sPuzzle: fill("M3 9l3-2-1-3 3-2 2 3 4-1 1 4-3 2 1 4-4 1-2-3-4 1z", "#f6a623", "#7d4d00") + fill("M13 13l3-1 1-2 3 2 3 4-2 1 1 4-3 1-2-2-4 1z", "#fff", "#333"),
	sBang: fill("M1 4l5 8L9 3l3 9 9-9-6 11h8l-8 5H1z", "#f79c1b", "#a85a00"),
	sTrim: box(1, 11, 10, 5, "#fff", "#111") + fill("M12 2h7l-5 12h-3z", "#1c3a86") + fill("M13 15l3-2 6 6-3 3z", "#fff", "#333"),
	sSplit: box(2, 12, 20, 5, "#fff", "#111") + fill("M12 2h7l-4 14h-2z", "#1c3a86"),
	sJoin: dot(8, 15, 4.5, "#fff", "#111", 2) + dot(16, 15, 4.5, "#1b1770", "#111", 2) + dot(12, 9, 4.5, "#a9a6ee", "#111", 2) + fly,
	sGroup: dot(12, 6, 4, "#b5b0f2", "#444") + dot(6, 15, 4, "#fff", "#444") + dot(18, 15, 4, "#1b1770", "#444"),
	sPts: line("M1 8c12-2 18 5 17 14", "#111", 2) + knob(7, 7) + knob(18, 18),
	sOff: line("M2 8c10-1 15 6 16 15", "#111", 2) + dashed("M1 3h9c7 3 11 8 12 14", "#222", 1, "1 2") + knob(9, 3) + knob(21, 15) + fly,
	sText: fill("M2 3h20l-1 6h-3l-1-2h-2l-1 13 2 2H8l1-2 1-13H6L4 9H1z", "#4f73dc", "#18286a"),
	sMove: box(3, 14, 6, 7, "#fff", "#222") + box(15, 2, 7, 7, "#8aa2ea", "#222") + line("M10 14l5-5M11 9h4v4") + fly,
	sCopy: box(3, 2, 6, 6, "#8aa2ea", "#222") + box(14, 5, 7, 6, "#8aa2ea", "#222") + box(11, 9, 7, 6, "#8aa2ea", "#222") + box(3, 15, 6, 6, "#fff", "#222") + box(15, 17, 6, 5, "#8aa2ea", "#222"),
	sRot: box(1, 3, 6, 14, "#fff", "#222") + fill("M10 19L19 8l4 3-8 11z", "#8aa2ea", "#222") + line("M8 6c4 0 6 1 7 4M12 9l3 1 1-4"),
	sBool: fill("M2 6l11-5 9 5v11l-10 5-10-4z", "#6f8de8", "#18286a") + fill("M2 6l11-5 9 5-10 4z", "#b5c6f8", "#18286a") + fill("M8 14l6-1v7l-6-1z", "#fff") + fly,
	sProj: fill("M1 21l6-5h16l-5 5z", "#5b7fe6", "#18286a") + line("M6 18V4M12 18V4M18 18V4", "#fff", 2.5) + fly,
	sArray: [2, 10, 18].map((x) => [2, 9, 16].map((y) => box(x, y, 4, 4, x + y > 17 ? "#9fb3f0" : "#6f8de8", "#222")).join("")).join("") + fly,
	sAlign: box(7, 2, 10, 5, "#fff", "#222") + box(9, 9, 6, 5, "#fff", "#222") + box(8, 16, 8, 6, "#fff", "#222") + line("M12 1v22", "#c22", 2) + fly,
	sBend: fill("M2 6l8-4v15l-8 4z", "#eee", "#444") + fill("M14 2l8 2-5 18-8-3z", "#6f8de8", "#18286a") + fly,
	sCheck: fill("M3 14l2-1 4 5C12 11 16 6 22 2 16 9 13 15 10 22H8z", "#000") + fly,
	sSolids: fill("M1 8l5-5h7l2 3v9l-5 5-8-2z", "#b9b9b9", "#333") + fill("M17 4l5 15c-3 3-8 3-10 0z", "#999", "#333") + fly,
	sPyr: fill("M11 8l10 10-10 5-9-5z", "#f4b73a", "#8a4b00") + line("M11 8v15", "#8a4b00") + fill("M9 4l6-3h8v4h-8z", "#ddd", "#222") + fly,

	// ribbon: geometry
	gPoint: hex(line("M8.500 8.500l7 7M15.500 8.500l-7 7", "#fff", 3)),
	gVector: hex(fill("M16 6l1 7-2-2-6 7-2-2 6-7-3-1z", "#fff")),
	gCircle: hex(dot(12, 12, 6, "none", "#fff", 2)),
	gArc: hex(line("M8 6c6 1 7 6 8 12M6 9l4-4", "#fff", 1.6)),
	gEllipse: hex(`<ellipse cx="12" cy="12" rx="7" ry="4" transform="rotate(-45 12 12)" fill="none" stroke="#fff" stroke-width="1.500"/>` + line("M9 15l6-6", "#bbb")),
	gLine: hex(line("M7 17L17 7", "#fff", 1.5) + box(5.5, 15, 4, 4, "#1d1d1d", "#fff") + box(14.5, 5, 4, 4, "#1d1d1d", "#fff")),
	gPlane: hex(fill("M5 14l4-7 10-1-4 9z", "#eee") + box(9, 9, 5, 4, "#1d1d1d")),
	gRect: hex(line("M12 5l6 7-6 7-6-7zM9 8l7 9", "#fff", 1.3)),
	gBox: hex(fill("M7 8l6-2 4 3v8l-5 2-5-3z", "#ddd") + fill("M7 8l6-2 4 3-5 2z", "#fff")),
	gBrep: hex(fill("M6 13l6-8 6 3-4 10-5 1z", "#ccc") + dot(14, 9, 3, "#fff")),
	gMesh: hex(line("M7 6h10v12H7zM7 12h10M12 6v12M7 6l10 12M17 6L7 18", "#ccc", 1)),
	gFace: hex(fill("M8 7l7-2v14l-8-4z", "#999") + line("M8 7l7-2v14l-8-4zM12 6l-1 11M8 11h7", "#fff")),
	gSub: hex(word("A", 8, 11, 8) + word("C", 17, 11, 8) + word("B", 8, 19, 8) + fill("M12 12h7v7z", "#ddd")),
	gSurf: hex(line("M6 8c4-3 7 2 12-1v10c-5 2-7-3-12 0zM10 7l3 10", "#ddd", 1.4)),
	gField: hex(line("M8 16c2 3 9-1 9-5M8 16l6-8M12 17c3 0 6-8 2-9", "#fff", 2)),
	gSpiral: hex(line("M12 12c2-2 3 2 0 3-4 1-5-5-1-7 6-2 9 4 6 8-3 4-9 3-11-2", "#bbb", 1.2)),
	gGeo: hex(line("M6 12h12M12 5v14M7 8v8", "#fff", 2) + fill("M14 8l5 4-5 4z", "#fff")),
	gPipe: hex(line("M6 13c1-9 6-5 6 0s5 8 6-1", "#fff", 2)),
	gGroup: hex(dashed("M7 6h10v12H7z", "#fff", 1, "3 2") + dot(10, 10, 1.5, "#fff") + dot(14, 14, 1.5, "#fff") + dot(14, 9, 1.2, "#fff")),
	gTrans: hex(line("M16 6c-6-1-8 5-6 10 3 4 7 1 5-3-2-2-4 0-4 2", "#fff", 2)),

	// ribbon: primitive
	pBool: hex(dot(12, 12, 6.500, "#fff") + fill("M7.500 16.500a6.300 6.300 0 0 1 9-9z", "#1d1d1d")),
	pInt: hex(word("7", 12, 18, 17, "#fff", 'font-weight="bold" font-style="italic"')),
	pNum: hex(word("0.1", 12, 17, 13)),
	pText: hex(`<text x="12" y="18" font-size="17" fill="#fff" text-anchor="middle" font-weight="bold" font-family="Liberation Serif, serif">A</text>`),
	pColour: hex(dot(12, 12, 3, "#fff") + line("M12 5v14M6 12h12M8 8l8 8M16 8l-8 8", "#ddd", 1)),
	pDomain: hex(line("M5 18L18 5M5 14l8-8M9 19l9-9", "#aaa", 1) + fill("M17 9v7l-3-1-4 4-1-2 4-4-2-2z", "#fff")),
	pCulture: hex(dot(11, 10, 7, "#ddd") + word("ÜÇ", 11, 13, 8, "#111") + fill("M12 15l5 6-1-7z", "#ddd")),
	pDom1: hex(line("M5 12h14M8 8v8M16 8v8", "#fff", 2)),
	pDom2: hex(line("M9 5v14M15 5v14M5 9h14M5 15h14", "#fff", 1.4)),
	pGuid: hex(`<text x="12" y="17" font-size="13" fill="#fff" text-anchor="middle" font-weight="bold" font-family="Liberation Serif, serif">ID</text>`),
	pMatrix: hex(line("M9 6H7v12h2M15 6h2v12h-2", "#fff", 1.4) + dashed("M10 8v8M14 8v8", "#fff", 2, "3 2")),
	pTime: hex(dot(12, 12, 6, "#bbb", "#fff", 1.5) + line("M12 12l3-3M12 12l-3-1", "#111", 1.5)),
	pShader: hex(`<path d="M6.500 1.500h11L23 12l-5.500 10.500h-11L1 12z" fill="#777" stroke="#222"/>` + line("M5 9l9 12M8 4l11 15M13 3l8 11M5 15L14 3M8 20L19 5M13 21l7-9", "#999", 1)),
	pTree: hex(line("M12 22v-8l-6-6M12 14l6-6M12 12V4M8 10V5M16 10V5", "#fff", 2)),
	pPath: hex(word("C:/", 12, 16, 10)),
	pBall: hex(dot(12, 12, 7, "#aaa") + dot(10, 9, 3, "#eee")),

	// ribbon: input
	iButton: tile(line("M12 4v10", "#111", 3) + fill("M8 10h8l-4 5z", "#111") + line("M5 18.500h14M5 17v4M8 17v4M11 17v4M14 17v4M17 17v4", "#111", 1)),
	iSketch: tile(scribble, "#fbc02d"),
	iSlider: tile(box(8, 4, 8, 15, "#333", "#111") + box(9, 5, 6, 7, "#fff"), "#b5b5b5"),
	iKnob: dot(12, 12, 10, "#777", "#222") + dot(12, 12, 7, "#222", "#999") + fill("M14 9l8 3-8 4z", "#333"),
	iDigit: tile(word("4", 14, 11, 12, "#ddd") + word("5", 12, 21, 13, "#333", 'font-weight="bold"'), "#888"),
	iPanel: tile(box(5, 5, 14, 3, "#eee", "#333") + box(5, 10, 14, 3, "#eee", "#333") + box(5, 15, 14, 3, "#eee", "#333")),
	iToggle: tile(box(6, 6, 12, 12, "#444", "#111"), "#999"),
	iMd: tile(line("M12 21V5M3 12h17", "#888", 2) + fill("M12 3l3 5H9z", "#d33") + fill("M21 15l-5-3v6z", "#26c") + line("M12 12V6", "#d33", 2) + line("M12 15h5", "#26c", 2) + dot(12, 14, 2, "#fff", "#111"), "#eee"),
	iPink: box(1, 2, 22, 20, "#f06aa8", "#7a1344") + line("M1 12h7c4 0 3 5 7 5h8", "#fff", 1.5) + dot(3, 12, 2, "#fff", "#111") + dot(14, 16, 2, "#fff", "#111"),
	iGreen: box(1, 2, 22, 20, "#49c234", "#164d0b") + box(5, 5, 6, 6, "#9be88d") + box(13, 12, 6, 7, "#1c7a14"),
	iCal: box(1, 1, 22, 22, "#2a2a2a") + word("AUG", 12, 9, 8) + word("20", 12, 21, 13, "#fff", 'font-weight="bold"'),
	iClock: dot(12, 12, 10.5, "#222", "#000") + line("M12 12V5M12 12l-6 2", "#fff", 2),
	iCube: fill("M5 8l7-5 8 4-2 12-9 2z", "#6a8", "#333") + fill("M5 8l7-5 1 8-4 10z", "#e85") + fill("M12 3l8 4-7 4z", "#58c") + line("M12 1v22M1 14h22", "#222"),
	iPaint: tile(fill("M3 3h18v6c-3 1-2 6-4 6s-1-3-3-3 0 8-3 8-2-7-4-7-3-1-4-3z", "#f08a10"), "#ddd"),
	iHue: dot(12, 12, 10, "#f3f3f3", "#555") + line("M12 4a8 8 0 0 1 8 8", "#6c6", 3) + line("M20 12a8 8 0 0 1-8 8", "#69e", 3) + line("M12 20a8 8 0 0 1-8-8", "#b6e", 3) + line("M4 12a8 8 0 0 1 8-8", "#e77", 3),
	iGraph: tile(line("M4 9h16M4 15h16M9 4v16M15 4v16", "#aaa") + line("M5 19c9 0 4-14 14-14", "#111", 2), "#eee"),
	iAtom: dot(12, 12, 9, "none", "#555") + dot(12, 12, 5, "none", "#555") + dot(12, 12, 2, "#333") + dot(4, 7, 2, "#333") + dot(20, 7, 2, "#333") + dot(12, 21, 2, "#333"),
	i3dm: chip("3DM"),
	iXyz: chip("XYZ"),
	iImg: chip("IMG"),
	iPdb: chip("PDB"),
	iShp: chip("SHP"),
	iCoord: chip("") + dot(9, 8, 3, "none", "#111", 1.5) + dot(15, 8, 3, "none", "#111", 1.5),

	// ribbon: util
	uCherry: line("M7 16c1-7 3-10 7-13M17 16c0-6-1-10-3-13", "#4a8a1c", 1.5) + fill("M14 3c-4-2-7 0-8 3 4 1 7 0 8-3z", "#4db82a") + dot(7, 17, 5, "#d3151a", "#700") + dot(17, 18, 4.5, "#d3151a", "#700"),
	uTree: tile(line("M12 22V10M12 14L6 7M12 14l6-7M12 10V4", "#111", 2) + dot(8, 8, 3, "#333") + dot(15, 7, 4, "#333"), "#ddd"),
	uRing: dot(12, 13, 8, "#ccc", "#333", 2.5) + fill("M14 2h8l-3 6z", "#555"),
	uAbc: word("ABC", 12, 16, 11, "#222", 'font-weight="bold" transform="rotate(-35 12 12)"'),
	uDam: tile(line("M6 7v5a6 6 0 0 0 12 0V7", "#222", 3), "#aaa"),
	uRec: box(2, 2, 20, 20, "#ddd", "#666") + dot(12, 8, 5, "#f05a1a", "#8a2600") + word("REC", 12, 21, 9, "#888"),
	uTimer: tile(line("M7 8a7 7 0 1 0 9-2M12 13L9 7", "#222", 3), "#aaa"),
	uRight: fill("M2 8h10V3l10 9-10 9v-5H2z", "#444", "#111"),
	uRightW: fill("M2 8h10V3l10 9-10 9v-5H2z", "#eee", "#555"),
	uEye: `<ellipse cx="10" cy="10" rx="8" ry="9" fill="#ccc" stroke="#555"/>` + dot(10, 10, 3, "#777") + dot(16, 16, 6, "#e23a86", "#701040") + dot(15, 15, 2.5, "#fff"),
	uFlask: fill("M9 2h6v7l5 11-2 2H6l-2-2L9 9z", "#eee", "#555") + fill("M8 12h8l4 8-2 2H6l-2-2z", "#e23a86", "#701040"),
	uFx: `<text x="12" y="12" font-size="13" fill="#222" text-anchor="middle" font-style="italic" font-family="Liberation Serif, serif">f(x)</text>` + fill("M6 15h12l4 8H2z", "#e65a9a", "#701040"),

	// grasshopper toolbar
	ghOpen: fill("M6 2h9l5 5v13H6z", "#fff", "#555") + fill("M2 9h8l2-2h9v14H2z", "#6ac03a", "#2c6a0e"),
	ghSave: box(1.5, 1.5, 21, 21, "#2a6fe0", "#0b2d7a") + box(5, 2, 14, 11, "#eee", "#999") + box(7, 15, 10, 8, "#ddd", "#333") + box(9, 17, 3, 5, "#2a6fe0"),
	ghFrame: line("M9 3.500H3.500V9M15 3.500h5.500V9M9 20.500H3.500V15M15 20.500h5.500V15", "#111", 3) + line("M10 10l4 4M14 10l-4 4", "#111", 1.5),
	eye: fill("M1 12C6 4 18 4 23 12c-5 8-17 8-22 0z", "#cde6f5", "#234") + dot(12, 12, 5.500, "#2d9bd6", "#134") + dot(12, 12, 2.500, "#000") + dot(10, 10, 1.2, "#fff"),
	brush: line("M2 8c5-4 4 3 2 7-2 5 1 8 7 6", "#222", 1.5) + fill("M22 2C16 4 10 10 9 15l2 5c6 0 10-5 11-10z", "#e1301c", "#7a0c06") + fill("M19 5c-5 4-7 8-8 12l4-3z", "#ffb39a"),
	tubeOff: fill("M5 13L9 3l9-1 4 4-3 9z", "#ddd", "#777") + `<ellipse cx="15" cy="6" rx="5" ry="3" fill="#f5f5f5" stroke="#888"/><ellipse cx="12" cy="17" rx="9" ry="5" fill="#333"/>`,
	tubeWire: tube("#f6f6f6", "#fff") + `<ellipse cx="8" cy="16" rx="4" ry="5" fill="none" stroke="#333"/>`,
	tubeRed: tube("#c8201a", "#8a0e0a"),
	tubeGreen: tube("#5cb82a", "#2c6a0e") + fill("M2 13l5-6 9 11-2 4H7z", "#ddd", "#444") + line("M2 3l18 18", "#222"),
	ballOrange: dot(12, 12, 10, "#e8e8e8", "#555") + fill("M12 2a10 10 0 0 0 0 20z", "#f28c1a", "#8a4b00"),
	gemBlue: fill("M7 3h9l5 6-2 9-7 3-7-3-2-9z", "#69b1ee", "#1a4c8a") + fill("M8 5h7l2 5-6 3-6-4z", "#b4dbfa"),
	python: fill("M8 3c5-2 9 0 8 3v5H9c-3 0-3 4-3 5-4 0-4-8 0-8h7V7H7z", "#3871a3") + fill("M17 9c5 0 5 9 0 9h-6v1h6c0 4-9 5-9 0v-4c0-4 9 0 9-6z", "#f5cf45"),
	arrowPts: fill("M19 5l-2 9-3-2-6 7-3-3 7-6-2-3z", "#f5a623", "#333") + dot(4, 20, 2.5, "#fff", "#111", 1.5) + dot(20, 4, 2.5, "#fff", "#111", 1.5),
	compass: fill("M4 1l3 0 2 3-2 2-3-2z", "#000") + line("M4 9c0-2 1-3 3-4", "#000", 2) + `<circle cx="13" cy="13" r="9.700" fill="#fff" stroke="#333" stroke-width=".8"/>` + dot(13, 13, 8.4, "#c0c0c0") + dot(13, 13, 6.5, "#d4d4d4") + dot(13, 13, 4, "#e8e8e8") + fill("M6.500 6.500l3 .5-2.500 2.500zM19.500 6.500l-3 .5 2.500 2.500zM6.500 19.500l3-.5-2.500-2.500zM19.500 19.500l-3-.5 2.500-2.500z", "#fff"),
	resize: [[20, 4], [20, 12], [20, 20], [12, 12], [12, 20], [4, 20]].map(([x, y]) => box(x - 2, y - 2, 4, 4, "#999")).join(""),

	// context menu
	bucket: fill("M3 13l9-8 7 9-9 8z", "#ddd", "#222") + line("M12 5V1l-4 3v7", "#222", 1.5) + line("M17 10c4 0 5 3 5 10", "#d33a22", 3.5),
	head: fill("M6 6c3-6 14-5 15 3 0 4-2 6-2 9l-2 5-9-2-1-4H4l1-4-1-2z", "#9aa0a6", "#333") + dot(13, 8, 4, "#d4d8dc"),
	toggle: `<rect x="2" y="1" width="20" height="22" rx="2" fill="#ccc" stroke="#333" stroke-width="1.500"/>` + box(8, 4, 8, 16, "#333", "#111") + box(10, 6, 4, 6, "#bbb"),
	egg: fill("M4 8c0-6 6-8 9-4 6-3 9 2 8 7 2 7-5 12-11 10C3 22 1 17 4 8z", "#fff", "#888") + dot(13, 14, 5, "#f28c1a", "#c25a00") + dot(12, 12, 1.8, "#ffd9a0"),
	mReverse: mini(line("M8 9h6c4 0 3 7-2 7M10 6L7 9l3 3", "#333", 2)),
	mFlatten: mini(line("M12 6v10M8 12l4 4 4-4", "#333", 2.500)),
	mGraft: mini(line("M12 18V8M8 12l4-4 4 4", "#333", 2.500)),
	mSimplify: mini(line("M8 6l4 6 4-6M12 12v7", "#333", 2.500)),
	cursor: fill("M2 1v21l5-5 4 7 4-2-4-7h7z", "#fff", "#111"),

	// taskbar
	windows: fill("M0 3.500l10-1.500v9.500H0zM11 1.800L24 0v11.500H11zM0 12.500h10V22L0 20.500zM11 12.500h13V24l-13-1.800z", "#fff"),
	ring: dot(12, 12, 9.500, "none", "#fff", 2.5),
	taskview: line("M7 4h10v16H7zM4 6H2v12h2M20 6h2v12h-2", "#fff", 1),
	explorer: fill("M2 3h7l1 2h12v15H2z", "#fbd564") + fill("M2 7h20v13H2z", "#fde48f") + fill("M5 21v-8h14v8h-4v-4H9v4z", "#2ea4dc"),
	chrome: dot(12, 12, 11, "#fbc51b") + fill("M12 12L2.500 6.500A11 11 0 0 1 21.500 6.500H12z", "#de4a3c") + fill("M12 12l0 11A11 11 0 0 1 2.500 6.500L8 15z", "#23a055") + dot(12, 12, 5.5, "#fff") + dot(12, 12, 4.3, "#4a8af4"),
	notepad: fill("M17 2l4 19-4 2-4-3z", "#dfe9ec", "#789") + fill("M8 2l10 1-4 18L1 17z", "#6dbccd") + fill("M5 10l11 2-2 9L1 17z", "#3e93a8") + line("M8 2l10 1", "#eee", 2),
	cmd: box(1, 3, 22, 18, "#0a0a0a", "#999") + box(1, 3, 22, 2, "#ccc") + word("C:\\_", 7, 11, 5),
	excel: fill("M4 1h18v22H1V5z", "#e8f5e6", "#3c9a3c") + fill("M2 4h12v14H2z", "#9bd07a") + line("M4 5l8 12M13 4L4 17", "#14702a", 3) + box(12, 14, 10, 8, "#fff", "#7b7") + line("M13 17h8M13 20h8M17 14v8", "#7b7"),
	rhinoBig: box(0, 0, 24, 24, "#111") + fill("M0 0h5l-1 5 4 4 6 3 4 1V8l4 5 1-2v7l-3 4-5 2-2-5-7-3-6-6z", "#e8e8e8") + line("M5 6l3 7 5 5 5 1", "#333") + fill("M10 12l4 2-2 2z", "#d22"),
	yellow: dot(12, 12, 11.5, "#ff0"),
	chevron: line("M4 16l8-8 8 8", "#fff", 1.5),
	battery: box(7, 7, 15, 10, "#fff", "#fff") + line("M22.500 10v4M2 6v3h5V6M3 4v3M6 4v3M4 9v6h3", "#fff", 1.5),
	wifi: line("M5 22A17 17 0 0 1 22 5M9 22A13 13 0 0 1 22 9M14 22a8 8 0 0 1 8-8", "#fff", 1.2) + dot(20, 20, 2, "#fff"),
	speaker: line("M2 9h4l5-5v16l-5-5H2zM14 10c1 1 1 3 0 4", "#fff", 1.3) + line("M17 7c3 3 3 7 0 10M20 5c4 4 4 10 0 14", "#777", 1.3),
	message: line("M2 2h20v16h-7l-3 4-3-4H2zM6 7h12M6 10h12M6 13h8", "#fff", 1.2),
	ball: dot(11, 11, 9.500, "#1478e0") + dot(20, 17, 4, "#c8261c") + dot(17, 20, 2.500, "#f7b51b"),
};

function svg(name) {
	return `<svg viewBox="0 0 24 24" aria-hidden="true">${icons[name]}</svg>`;
}

document.querySelectorAll("[data-icon]").forEach((el) => {
	el.innerHTML = svg(el.dataset.icon);
});

function addButtons(target, names) {
	target.innerHTML = names
		.split(" ")
		.map((name) => `<button aria-label="${name}">${svg(name)}</button>`)
		.join("");
}

addButtons(
	document.querySelector("#toolbar"),
	"fNew fOpen fSave fPrint fProps fCut fCopy fPaste fUndo fPan fRotate fZoom fZoomWin fZoomExt fZoomSel fZoomPrev fFour fCar fPlane fCircle fSelect fBulb fLock fRender fWheel fShade fGhost fBlue fCone fGear fDims helpFly"
);
addButtons(
	document.querySelector("#sidebar"),
	"sArrow sPoint sPoly sCurve sCircle sEllipse sArc sRect sHexa sFillet sSrf sPatch sBox sBalls sExtr sMesh sPuzzle sBang sTrim sSplit sJoin sGroup sPts sOff sText sMove sCopy sRot sBool sProj sArray sAlign sBend sCheck sSolids sPyr"
);
addButtons(document.querySelector("#recent"), "iSketch iButton python arrowPts gPoint");

// ribbon panels, icons listed column by column
const panels = [
	["Geometry", "gPoint gVector|gCircle gArc gEllipse gLine gPlane gRect|gBox gBrep gMesh gFace gSub gSurf|gField gSpiral gGeo gPipe gGroup gTrans"],
	["Primitive", "pBool pInt pNum pText|pColour pDomain pCulture pDom1 pDom2 pGuid pMatrix pTime|pShader pTree pPath pBall"],
	["Input", "iButton iSketch|iSlider iKnob iDigit iPanel iToggle iMd|iPink iGreen iCal iClock iCube iPaint iHue iGraph|iAtom i3dm iXyz iImg iPdb iShp iCoord"],
	["Util", "uCherry uTree uRing uAbc|uDam uRec uTimer|uRight uRightW|uEye uFlask uFx"],
];
const ribbon = document.querySelector("#ribbon");
panels.forEach(([title, list]) => {
	let panel = document.createElement("div");
	panel.className = "ribbon-panel";
	let groups = document.createElement("div");
	groups.className = "ribbon-groups";
	list.split("|").forEach((names) => {
		let group = document.createElement("div");
		group.className = "ribbon-group";
		addButtons(group, names);
		groups.append(group);
	});
	panel.append(groups);
	panel.insertAdjacentHTML("beforeend", `<div class="caption">${title}</div>`);
	ribbon.append(panel);
});

// viewports: one grid unit is CELL px, origin in the centre
const CELL = 22.16;
const curve = [[0, 11], [-7, 6], [-7, -5], [3, -9], [6, 5], [10, 0]];

function flat([x, y]) {
	return [x * CELL, -y * CELL];
}
function perspective([x, y]) {
	let d = 1 - 0.00376 * x + 0.00753 * y;
	return [(12.415 * x + 7.077 * y) / d, (3.59 * x - 6.201 * y) / d];
}
function segment(a, b, color, w) {
	return `<line x1="${a[0]}" y1="${a[1]}" x2="${b[0]}" y2="${b[1]}" stroke="${color}" stroke-width="${w}"/>`;
}

function drawView(id, project, points, axes, range) {
	let out = "";
	for (let pass of ["minor", "major"]) {
		for (let i = -range; i <= range; i++) {
			let major = i % 10 === 0;
			if (major !== (pass === "major")) continue;
			let color = major ? "#868c95" : "#949aa2";
			let w = major ? 1.3 : project === perspective ? 0.6 : 1;
			// keep only the part of the plane in front of the camera
			let low = project === perspective ? Math.max(-range, (0.2 - 1 + 0.00376 * i) / 0.00753) : -range;
			let high = project === perspective ? Math.min(range, (1 - 0.2 + 0.00753 * i) / 0.00376) : range;
			out += segment(project([i, low]), project([i, range]), color, w);
			out += segment(project([-range, i]), project([high, i]), color, w);
		}
	}
	out += segment(project([0, 0]), project([100, 0]), "#99484a", 2);
	out += segment(project([0, 0]), project([0, 100]), "#479350", 2);
	let p = points.map(project);
	out += `<polyline points="${p.join(" ")}" fill="none" stroke="#1d8a1d" stroke-width="1.500"/>`;
	p.forEach(([x, y]) => {
		out += line(`M${x - 4} ${y - 4}l8 8M${x + 4} ${y - 4}l-8 8`, "#a00808", 2.5);
	});
	document.querySelector(id).insertAdjacentHTML(
		"afterbegin",
		`<svg class="scene" viewBox="-342 -357 684 714" preserveAspectRatio="xMidYMid slice">${out}</svg>
		<svg class="axes" viewBox="0 0 60 72">${axes}</svg>`
	);
}

function corner(up, right) {
	return line("M8 27v29h30", "#6a7078", 2) + `<text x="9" y="30">${up}</text><text x="40" y="61">${right}</text>`;
}
const tripod = line("M8 30v26l26 8M8 56l15-13", "#6a7078", 2) +
	'<text x="9" y="33">z</text><text x="23" y="46">y</text><text x="36" y="68">x</text>';

drawView("#vp-top", flat, curve, corner("y", "x"), 40);
drawView("#vp-perspective", perspective, curve, tripod, 110);
drawView("#vp-front", flat, curve.map(([x]) => [x, 0]), corner("z", "x"), 40);
drawView("#vp-right", flat, curve.map(([, y]) => [y, 0]), corner("z", "y"), 40);

// grasshopper canvas: page sheet, grid and wires
let grid = "";
for (let x = 163 - 187.5; x < 3000; x += 187.5) grid += segment([x, 0], [x, 3000], "#b0ada3", 1);
for (let y = 245 - 62.5 * 4; y < 3000; y += 62.5) grid += segment([0, y], [4000, y], "#b0ada3", 1);
const grip = (x, y) => dot(x, y, 5, "#fff", "#111", 2);

document.querySelector("#canvas").insertAdjacentHTML(
	"afterbegin",
	`<svg>
		<defs>
			<filter id="soft"><feGaussianBlur stdDeviation="12"/></filter>
		</defs>
		<rect x="155" y="237" width="4000" height="4000" fill="#3b3a36" opacity=".7" filter="url(#soft)"/>
		<rect x="163" y="245" width="4000" height="4000" fill="#d4d1c9"/>
		${grid}
		<rect x="163" y="245" width="4000" height="4000" fill="none" stroke="#222" stroke-width="2"/>
		${line("M454 818C540 818 530 793 619 793", "#93bb6c", 4)}
		${line("M716 791C750 791 770 800 786 822", "#55524c", 2)}
		${line("M716 796C748 796 764 804 778 822", "#55524c", 2)}
		${grip(390, 818)}${grip(619, 793)}${grip(714, 793)}${grip(803, 1088)}${grip(1004, 1088)}
	</svg>`
);
```
